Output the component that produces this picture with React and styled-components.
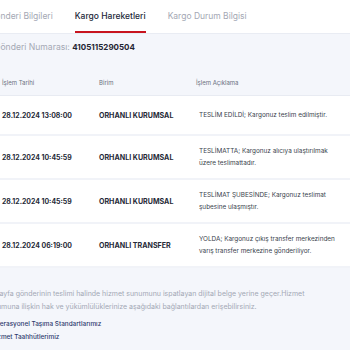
import styled, { createGlobalStyle } from "styled-components";

const GlobalStyle = createGlobalStyle`
	html, body {
		margin: 0;
		padding: 0;
		background: #f4f6fb;
		overflow: hidden;
	}
	body {
		font-family: Inter, "DejaVu Sans", sans-serif;
		color: #2a2e3b;
	}
`;

const rows = [
	{
		date: "28.12.2024 13:08:00",
		unit: "ORHANLI KURUMSAL",
		desc: ["TESLİM EDİLDİ; Kargonuz teslim edilmiştir."],
	},
	{
		date: "28.12.2024 10:45:59",
		unit: "ORHANLI KURUMSAL",
		desc: ["TESLİMATTA; Kargonuz alıcıya ulaştırılmak", "üzere teslimattadır."],
	},
	{
		date: "28.12.2024 10:45:59",
		unit: "ORHANLI KURUMSAL",
		desc: ["TESLİMAT ŞUBESİNDE; Kargonuz teslimat", "şubesine ulaşmıştır."],
	},
	{
		date: "28.12.2024 06:19:00",
		unit: "ORHANLI TRANSFER",
		desc: [
			"YOLDA; Kargonuz çıkış transfer merkezinden",
			"varış transfer merkezine gönderiliyor.",
		],
	},
];

const App = () => {
	return (
		<Page>
			<GlobalStyle />
			<TabBar>
				<Tab>Gönderi Bilgileri</Tab>
				<Tab $active>Kargo Hareketleri</Tab>
				<Tab>Kargo Durum Bilgisi</Tab>
			</TabBar>
			<Content>
				<ShipmentNo>
					Gönderi Numarası: <strong>4105115290504</strong>
				</ShipmentNo>
				<Table>
					<HeadRow>
						<HeadCell>İşlem Tarihi</HeadCell>
						<HeadCell>Birim</HeadCell>
						<HeadCell>İşlem Açıklama</HeadCell>
					</HeadRow>
					{rows.map((r, i) => (
						<Row key={i}>
							<DateCell>{r.date}</DateCell>
							<UnitCell>{r.unit}</UnitCell>
							<DescCell>
								{r.desc.map((line, j) => (
									<div key={j}>{line}</div>
								))}
							</DescCell>
						</Row>
					))}
				</Table>
				<Footer>
					<Note>
						<div>
							Bu sayfa gönderinin teslimi halinde hizmet sunumunu ispatlayan
							dijital belge yerine geçer.Hizmet
						</div>
						<div>
							sunumuna ilişkin hak ve yükümlülüklerinize aşağıdaki
							bağlantılardan erişebilirsiniz.
						</div>
					</Note>
					<Links>
						<LinkItem>Operasyonel Taşıma Standartlarımız</LinkItem>
						<LinkItem>Hizmet Taahhütlerimiz</LinkItem>
					</Links>
				</Footer>
			</Content>
		</Page>
	);
};

export default App;

const Page = styled.div`
	margin-left: -16px;
	width: 400px;
`;

const TabBar = styled.div`
	display: flex;
	gap: 22px;
	height: 34px;
	padding-left: 5px;
	background: #ffffff;
	border-bottom: 1px solid #e9ecf3;
	box-sizing: border-box;
`;

const Tab = styled.div`
	display: flex;
	align-items: center;
	height: 100%;
	box-sizing: border-box;
	font-size: 8.5px;
	font-weight: ${(p) => (p.$active ? 500 : 400)};
	color: ${(p) => (p.$active ? "#23283a" : "#a4a8b4")};
	border-bottom: 2px solid ${(p) => (p.$active ? "#c8141e" : "transparent")};
	white-space: nowrap;
`;

const Content = styled.div`
	padding-top: 6px;
`;

const ShipmentNo = styled.div`
	padding-left: 10px;
	height: 14px;
	line-height: 14px;
	font-size: 8.6px;
	color: #a4a8b4;

	strong {
		color: #1f2433;
		font-weight: 700;
		font-size: 8px;
	}
`;

const Table = styled.div`
	margin-top: 16px;
`;

const grid = `
	display: grid;
	grid-template-columns: 97px 97px 1fr;
	padding-left: 18px;
`;

const HeadRow = styled.div`
	${grid}
	height: 25px;
	align-items: center;
	border-bottom: 1px solid #e8ebf2;
`;

const HeadCell = styled.div`
	font-size: 6px;
	color: #6b7080;
`;

const Row = styled.div`
	${grid}
	min-height: 40px;
	align-items: center;
	background: #ffffff;
	border-bottom: 2px solid #f1f3f8;
	box-sizing: border-box;

	&:first-of-type {
		min-height: 39px;
	}
`;

const DateCell = styled.div`
	font-size: 6.9px;
	font-weight: 700;
	color: #262a37;
	white-space: nowrap;
`;

const UnitCell = styled.div`
	font-size: 7.1px;
	font-weight: 700;
	color: #262a37;
	white-space: nowrap;
`;

const DescCell = styled.div`
	padding: 9px 0 9px 3px;
	font-size: 6.4px;
	line-height: 12px;
	color: #3a3f4d;
	white-space: nowrap;
`;

const Footer = styled.div`
	padding-top: 19px;
	padding-left: 1px;
`;

const Note = styled.div`
	font-size: 7px;
	line-height: 13px;
	color: #a3a8b5;
	white-space: nowrap;
`;

const Links = styled.div`
	display: flex;
	flex-direction: column;
	padding-top: 5px;
	padding-left: 6px;
`;

const LinkItem = styled.div`
	font-size: 6.4px;
	line-height: 13px;
	font-weight: 500;
	color: #2f3a6e;
	white-space: nowrap;
`;
